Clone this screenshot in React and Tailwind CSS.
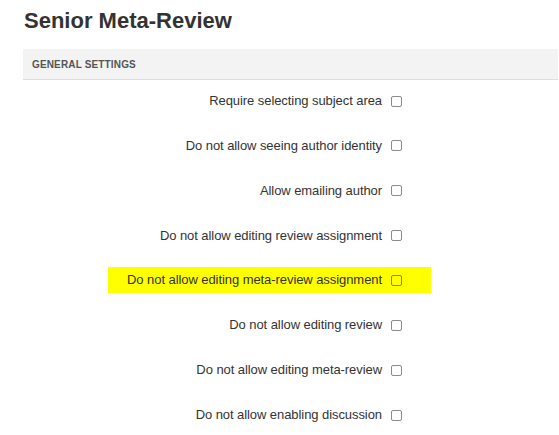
import React from "react";

const rows = [
  "Require selecting subject area",
  "Do not allow seeing author identity",
  "Allow emailing author",
  "Do not allow editing review assignment",
  "Do not allow editing meta-review assignment",
  "Do not allow editing review",
  "Do not allow editing meta-review",
  "Do not allow enabling discussion",
];

function Row({ label, highlight }) {
  return (
    <div className="flex h-[26px] items-center pl-[85px]">
      <div
        className={
          "flex h-[26px] w-[323px] items-center " +
          (highlight ? "bg-[#ffff00]" : "")
        }
      >
        <span className="w-[274px] text-right text-[13px] leading-[26px] tracking-[-0.07px] text-[#333333] whitespace-nowrap">
          {label}
        </span>
        <span className="ml-[9px] box-border h-[11px] w-[11px] rounded-[2px] border border-[rgba(0,0,0,0.45)]" />
      </div>
    </div>
  );
}

export default function App() {
  return (
    <div
      className="min-h-[435px] w-[559px] bg-white pl-[23px] pr-[1px]"
      style={{ fontFamily: '"Liberation Sans", Arial, sans-serif' }}
    >
      <h1 className="pt-[8px] pl-[1px] text-[22px] font-bold leading-[26px] text-[#333333]">
        Senior Meta-Review
      </h1>
      <div className="mt-[15px] flex h-[31px] items-center border-b border-[#dddddd] bg-[#f3f3f3] pl-[9px]">
        <span className="text-[10px] font-bold tracking-[0.15px] text-[#555555]">
          GENERAL SETTINGS
        </span>
      </div>
      <div className="flex flex-col gap-[18.86px] pt-[8px]">
        {rows.map((r, i) => (
          <Row key={r} label={r} highlight={i === 4} />
        ))}
      </div>
    </div>
  );
}
